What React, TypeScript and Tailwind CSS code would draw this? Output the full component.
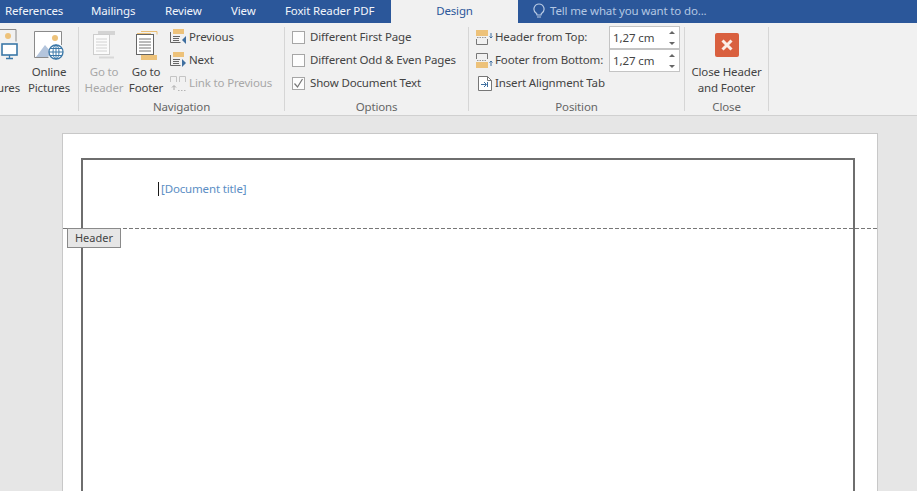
import { FC, ReactNode } from 'react';

const font = { fontFamily: '"Noto Sans", "Open Sans", sans-serif' };

interface GroupProps {
  width: string;
  label: string;
  children?: ReactNode;
}

const Group: FC<GroupProps> = ({ width, label, children }) => (
  <div className={`flex h-full shrink-0 flex-col ${width}`}>
    <div className="relative flex min-h-0 flex-1">{children}</div>
    <div className="h-[16px] text-center text-[11.5px] leading-[16px] tracking-[-0.15px] text-[#666]">{label}</div>
  </div>
);

const Sep = () => <div className="mt-[4px] h-[84px] w-px shrink-0 bg-[#d6d6d6]" />;

const BigButton: FC<{ icon: ReactNode; lines: [string, string]; disabled?: boolean; className?: string }> = ({
  icon,
  lines,
  disabled,
  className,
}) => (
  <div className={`flex flex-col items-center ${disabled ? 'text-[#a8a8a8]' : 'text-[#444]'} ${className ?? ''}`}>
    <div className="flex h-[41px] shrink-0 items-end pb-[4px]">{icon}</div>
    <div className="text-center text-[11.5px] leading-[16px] tracking-[-0.15px] whitespace-nowrap">
      <div className="h-[16px]">{lines[0]}</div>
      <div>{lines[1]}</div>
    </div>
  </div>
);

// page with a header band and a footer band, the active one drawn heavy
const GoToIcon: FC<{ muted?: boolean }> = ({ muted }) => {
  const stroke = muted ? '#cdcdcd' : '#666';
  const lines = muted ? '#d2d2d2' : '#777';
  return muted ? (
    <svg width="24" height="29" viewBox="0 0 24 29">
      <rect x="6" y="0" width="17" height="4" fill="#d4d4d4" />
      <rect x="1.500" y="3.500" width="16" height="20" fill="#fbfbfb" stroke={stroke} />
      <path d="M4 8h11M4 11h11M4 14h11M4 17h11M4 20h11" stroke={lines} />
      <path d="M7 26.500h15" stroke="#d8d8d8" strokeWidth="2" />
    </svg>
  ) : (
    <svg width="24" height="29" viewBox="0 0 24 29">
      <path d="M7 .5h16v3" fill="none" stroke="#e9bd72" />
      <path d="M3 2.500h14" stroke="#edc27a" strokeWidth="1" />
      <rect x="2.500" y="3.500" width="17" height="20" fill="#fff" stroke={stroke} />
      <path d="M5 8h12M5 11h12M5 14h12M5 17h12M5 20h12" stroke={lines} />
      <rect x="7" y="24" width="16" height="5" fill="#edc27a" />
    </svg>
  );
};

const PrevNextIcon: FC<{ next?: boolean }> = ({ next }) => (
  <svg width="17" height="16" viewBox="0 0 17 16">
    <rect x="3" y="0" width="11" height="5" fill="#edc27a" />
    <path d="M.5 3v10.500h10M3 7.500h7M3 9.500h6M3 11.500h6" fill="none" stroke="#666" />
    {next ? <path d="M12 7l4 4-4 4z" fill="#3f6f9f" /> : <path d="M16 7l-4 4 4 4z" fill="#3f6f9f" />}
  </svg>
);

const LinkIcon = () => (
  <svg width="17" height="17" viewBox="0 0 17 17">
    <path d="M.5 7V1.500h6V7M9.500 7V1.500h6V7" fill="none" stroke="#c4c4c4" />
    <path d="M4 15v-4M2 12.500l2-2 2 2" fill="none" stroke="#a8a8a8" />
    <path d="M8 15.500h8" stroke="#b5b5b5" strokeDasharray="1.500 1.500" />
  </svg>
);

const Check: FC<{ checked?: boolean }> = ({ checked }) => (
  <div className="flex size-[13px] shrink-0 items-center justify-center border border-[#a6a6a6] bg-[#fdfdfd]">
    {checked && (
      <svg width="11" height="11" viewBox="0 0 11 11">
        <path d="M1.500 5.500l3 3.500 5-8" fill="none" stroke="#777" strokeWidth="1.200" />
      </svg>
    )}
  </div>
);

const Spinner: FC<{ value: string }> = ({ value }) => (
  <div className="flex h-[23px] w-[71px] items-center justify-between border border-[#c4c4c4] bg-white pr-[3px] pl-[3px] text-[11.5px] tracking-[-0.1px] text-[#444]">
    <span>{value}</span>
    <svg width="8" height="18" viewBox="0 0 8 18">
      <path d="M1 5l3-3 3 3z" fill="#666" />
      <path d="M1 13l3 3 3-3z" fill="#666" />
    </svg>
  </div>
);

const HeaderPosIcon: FC<{ footer?: boolean }> = ({ footer }) => (
  <svg width="18" height="15" viewBox="0 0 18 15">
    {footer ? (
      <>
        <path d="M.5 6V.5h11V6" fill="none" stroke="#777" />
        <path d="M1 7.500h10" stroke="#999" strokeDasharray="1.500 1" />
        <rect x="0" y="9" width="12" height="6" fill="#edc27a" />
        <path d="M15 13V8M13.500 9.500L15 8l1.500 1.500" fill="none" stroke="#3f6f9f" />
      </>
    ) : (
      <>
        <rect x="0" y="0" width="12" height="6" fill="#edc27a" />
        <path d="M1 7.500h10" stroke="#999" strokeDasharray="1.500 1" />
        <path d="M.5 9v5.500h11V9" fill="none" stroke="#777" />
        <path d="M15 3v5M13.500 6.500L15 8l1.500-1.500" fill="none" stroke="#3f6f9f" />
      </>
    )}
  </svg>
);

const AlignIcon = () => (
  <svg width="14" height="15" viewBox="0 0 14 15">
    <path d="M.5.5h9l4 4v10H.5z" fill="#fff" stroke="#777" />
    <path d="M9.500.5v4h4" fill="none" stroke="#777" />
    <path d="M3 8.500h5M6 6l2.500 2.500L6 11" fill="none" stroke="#3f6f9f" />
    <path d="M9.500 6v5" stroke="#3f6f9f" />
  </svg>
);

const PicturesIcon = () => (
  <svg width="30" height="29" viewBox="0 0 30 29">
    <path d="M.5 26.500V.5h27V14M.5 26.500h14" fill="#fff" stroke="#8a8a8a" />
    <circle cx="21" cy="7" r="3" fill="#edc27a" />
    <path d="M2 26l9-12 6 7-3 5z" fill="#b4c5dc" />
    <circle cx="22" cy="21" r="7" fill="#fff" stroke="#3b78a8" strokeWidth="1.300" />
    <path d="M15 21h14M16 17.500h12M16 24.500h12M22 14v14" stroke="#3b78a8" />
    <ellipse cx="22" cy="21" rx="3" ry="7" fill="none" stroke="#3b78a8" />
  </svg>
);

const MonitorIcon = () => (
  <svg width="24" height="31" viewBox="0 0 24 31">
    <path d="M-1 .5h18v12" fill="none" stroke="#8a8a8a" />
    <circle cx="9" cy="7" r="3" fill="#edc27a" />
    <rect x="3" y="15" width="15" height="11" fill="#fff" stroke="#3b78a8" strokeWidth="1.600" />
    <path d="M10.500 26v3M7 29.500h7" stroke="#3b78a8" strokeWidth="1.300" />
  </svg>
);

const Row: FC<{ children: ReactNode; className?: string }> = ({ children, className }) => (
  <div className={`flex h-[23px] items-center pb-px whitespace-nowrap text-[11.5px] tracking-[-0.15px] ${className ?? 'text-[#444]'}`}>
    {children}
  </div>
);

export default function App() {
  return (
    <div className="h-[491px] w-[917px] overflow-hidden bg-[#e6e6e6]" style={font}>
      {/* tab strip */}
      <div className="flex h-[23px] items-center bg-[#2b579a] pl-[5px] text-[11.5px] tracking-[-0.15px] text-[#f2f5fa]">
        <span className="mb-px w-[57px] whitespace-nowrap">References</span>
        <span className="mb-px ml-[29px] w-[45px] whitespace-nowrap">Mailings</span>
        <span className="mb-px ml-[29px] w-[37px] whitespace-nowrap">Review</span>
        <span className="mb-px ml-[29px] w-[26px] whitespace-nowrap">View</span>
        <span className="mb-px ml-[28px] w-[88px] whitespace-nowrap">Foxit Reader PDF</span>
        <div className="ml-[18px] flex h-full w-[127px] items-center justify-center bg-[#f1f1f1] pb-px text-[#2b579a]">Design</div>
        <svg className="mb-px ml-[15px]" width="12" height="16" viewBox="0 0 12 16">
          <path d="M6 1a5 5 0 0 0-3 9c.6.5 1 1.200 1 2h4c0-.8.4-1.500 1-2a5 5 0 0 0-3-9zM4 14h4" fill="none" stroke="#b9cbe4" strokeWidth="1.200" />
        </svg>
        <span className="mb-px ml-[5px] text-[#b4c7e3]">Tell me what you want to do...</span>
      </div>

      {/* ribbon */}
      <div className="flex h-[93px] border-b border-[#d0d0d0] bg-[#f1f1f1]">
        <Group width="w-[78px]" label="">
          <div className="flex w-full overflow-hidden">
            <BigButton
              className="-ml-[25px] w-[48px] shrink-0"
              icon={<div className="ml-[24px]"><MonitorIcon /></div>}
              lines={['', 'Pictures']}
            />
            <BigButton className="ml-px w-[50px] shrink-0" icon={<PicturesIcon />} lines={['Online', 'Pictures']} />
          </div>
        </Group>
        <Sep />
        <Group width="w-[205px]" label="Navigation">
          <BigButton className="ml-[3px] w-[44px]" disabled icon={<GoToIcon muted />} lines={['Go to', 'Header']} />
          <BigButton className="-ml-px w-[42px]" icon={<GoToIcon />} lines={['Go to', 'Footer']} />
          <div className="ml-[3px] pt-[3px]">
            <Row><span className="mr-[2px]"><PrevNextIcon /></span>Previous</Row>
            <Row><span className="mr-[2px]"><PrevNextIcon next /></span>Next</Row>
            <Row className="text-[#a8a8a8]"><span className="mr-[2px]"><LinkIcon /></span>Link to Previous</Row>
          </div>
        </Group>
        <Sep />
        <Group width="w-[183px]" label="Options">
          <div className="pt-[3px] pl-[7px]">
            <Row><Check /><span className="ml-[5px]">Different First Page</span></Row>
            <Row><Check /><span className="ml-[5px]">Different Odd &amp; Even Pages</span></Row>
            <Row><Check checked /><span className="ml-[5px]">Show Document Text</span></Row>
          </div>
        </Group>
        <Sep />
        <Group width="w-[215px]" label="Position">
          <div className="pt-[3px] pl-[7px]">
            <Row><HeaderPosIcon /><span className="ml-px">Header from Top:</span></Row>
            <Row><HeaderPosIcon footer /><span className="ml-px">Footer from Bottom:</span></Row>
            <Row><span className="ml-[2px] mr-[3px]"><AlignIcon /></span>Insert Alignment Tab</Row>
          </div>
          <div className="absolute top-[3px] left-[140px]">
            <Spinner value="1,27 cm" />
            <Spinner value="1,27 cm" />
          </div>
        </Group>
        <Sep />
        <Group width="w-[83px]" label="Close">
          <BigButton
            className="w-full"
            icon={
              <svg width="24" height="24" viewBox="0 0 24 24" className="mb-[3px]">
                <rect width="24" height="24" rx="2" fill="#d9603f" />
                <path d="M7.500 7.500l9 9M16.500 7.500l-9 9" stroke="#fbeee8" strokeWidth="3" />
              </svg>
            }
            lines={['Close Header', 'and Footer']}
          />
        </Group>
        <Sep />
      </div>

      {/* document page */}
      <div className="pt-[17px] pl-[62px]">
        <div className="relative h-[400px] w-[816px] border border-[#c8c8c8] bg-white pt-[24px] pl-[18px]">
          <div className="h-[400px] w-[774px] border-2 border-[#6e6e6e] pt-[21px] pl-[75px]">
            <div className="flex h-[16px] items-center text-[11.5px] tracking-[-0.15px] text-[#5b8ec4]">
              <span className="h-[14px] w-px bg-[#1a1a1a]" />
              <span className="ml-[2px]">[Document title]</span>
            </div>
          </div>
          <div className="absolute top-[94px] left-0 h-px w-full bg-[repeating-linear-gradient(90deg,#777_0_4px,transparent_4px_6px)]" />
          <div className="absolute top-[94px] left-[4px] flex h-[20px] w-[54px] items-center justify-center border border-[#8a8a8a] bg-[#e6e6e6] text-[11px] text-[#444]">
            Header
          </div>
        </div>
      </div>
    </div>
  );
}
